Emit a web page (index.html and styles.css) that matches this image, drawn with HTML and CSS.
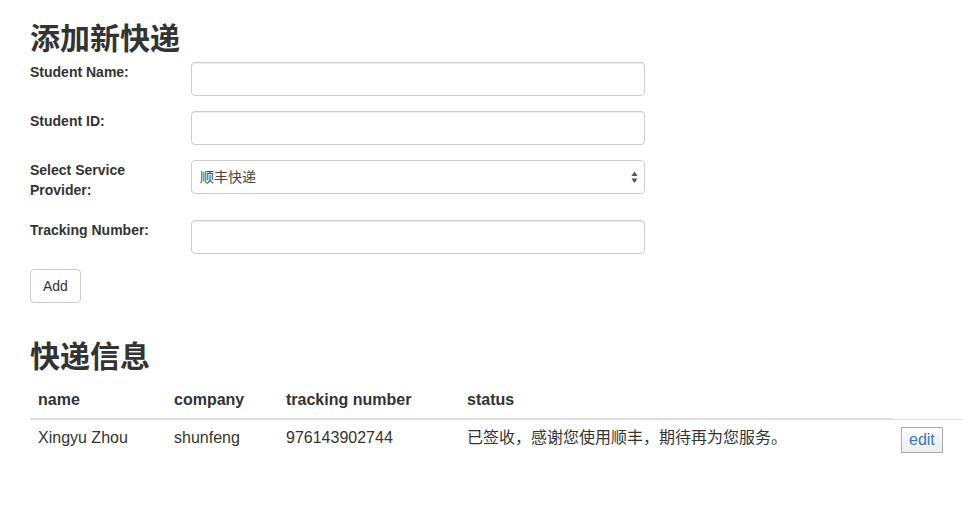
FILE: index.html
```html
<!DOCTYPE html>
<html lang="zh">
<head>
<meta charset="utf-8">
<title>快递</title>
<link rel="stylesheet" href="styles.css">
</head>
<body>
<h2 class="title">添加新快递</h2>
<form class="form">
  <div class="group">
    <label class="label">Student Name:</label>
    <input class="control" type="text">
  </div>
  <div class="group">
    <label class="label">Student ID:</label>
    <input class="control" type="text">
  </div>
  <div class="group">
    <label class="label">Select Service Provider:</label>
    <div class="select-wrap">
      <select class="control select">
        <option>顺丰快递</option>
      </select>
      <svg class="arrows" width="7" height="13" viewBox="0 0 7 13"><path d="M3.5 0.5 L6.5 5 L0.5 5 Z" fill="#555"/><path d="M0.5 7.5 L6.5 7.5 L3.5 12 Z" fill="#555"/></svg>
    </div>
  </div>
  <div class="group">
    <label class="label">Tracking Number:</label>
    <input class="control" type="text">
  </div>
  <div class="actions">
    <button class="btn" type="button">Add</button>
  </div>
</form>
<h2 class="title title-second">快递信息</h2>
<table class="table">
  <colgroup>
    <col class="c-name">
    <col class="c-company">
    <col class="c-track">
    <col class="c-status">
    <col class="c-edit">
  </colgroup>
  <thead>
    <tr><th>name</th><th>company</th><th>tracking number</th><th>status</th></tr>
  </thead>
  <tbody>
    <tr>
      <td>Xingyu Zhou</td>
      <td>shunfeng</td>
      <td>976143902744</td>
      <td>已签收，感谢您使用顺丰，期待再为您服务。</td>
      <td><button class="edit" type="button">edit</button></td>
    </tr>
  </tbody>
</table>
</body>
</html>
```
FILE: styles.css
```css
html, body {
  margin: 0;
  padding: 0;
  background: #fff;
}
body {
  padding: 0 30px;
  font-family: "Liberation Sans", "Noto Sans CJK SC", sans-serif;
  font-size: 14px;
  line-height: 20px;
  color: #333;
  overflow: hidden;
}
.title {
  margin: 20px 0 10px;
  font-family: "Noto Sans CJK SC", "Liberation Sans", sans-serif;
  font-size: 30px;
  line-height: 32px;
  font-weight: 700;
  color: #333;
}
.title-second {
  margin-bottom: 12px;
}
.form {
  display: flow-root;
  margin: 0;
}
.group {
  display: grid;
  grid-template-columns: 131px 454px;
  column-gap: 30px;
  align-items: start;
  margin-bottom: 15px;
}
.label {
  display: block;
  margin-bottom: 5px;
  font-weight: bold;
  font-size: 14px;
  line-height: 20px;
}
.control {
  display: block;
  box-sizing: border-box;
  width: 454px;
  height: 34px;
  margin: 0;
  padding: 6px 8px;
  border: 1px solid #ccc;
  border-radius: 4px;
  background: #fff;
  box-shadow: inset 0 1px 1px rgba(0, 0, 0, 0.075);
  font-family: "Liberation Sans", "Noto Sans CJK SC", sans-serif;
  font-size: 14px;
  color: #555;
  outline: none;
}
.select-wrap {
  position: relative;
}
.select {
  -webkit-appearance: none;
  appearance: none;
  box-shadow: none;
  color: #444;
}
.arrows {
  position: absolute;
  right: 7px;
  top: 11px;
}
.actions {
  margin-bottom: 15px;
}
.btn {
  box-sizing: border-box;
  height: 34px;
  padding: 6px 12px;
  border: 1px solid #ccc;
  border-radius: 4px;
  background: #fff;
  font-family: "Liberation Sans", sans-serif;
  font-size: 14px;
  line-height: 20px;
  color: #333;
}
.table {
  width: 933px;
  table-layout: fixed;
  border-collapse: collapse;
  border-spacing: 0;
  font-size: 16px;
  line-height: 20px;
}
.c-name { width: 136px; }
.c-company { width: 112px; }
.c-track { width: 181px; }
.c-status { width: 434px; }
.c-edit { width: 70px; }
.table th {
  padding: 8px;
  text-align: left;
  vertical-align: bottom;
  font-weight: bold;
  border-bottom: 2px solid #ddd;
}
.table td {
  padding: 8px;
  vertical-align: top;
  border-top: 1px solid #ddd;
  white-space: nowrap;
}
.edit {
  box-sizing: border-box;
  height: 26px;
  margin-top: -1px;
  padding: 2px 7px;
  border: 1px solid #aaa;
  border-radius: 0;
  background: linear-gradient(#fdfdfd, #ececec);
  font-family: "Liberation Sans", sans-serif;
  font-size: 16px;
  line-height: 20px;
  color: #337ab7;
}
```
